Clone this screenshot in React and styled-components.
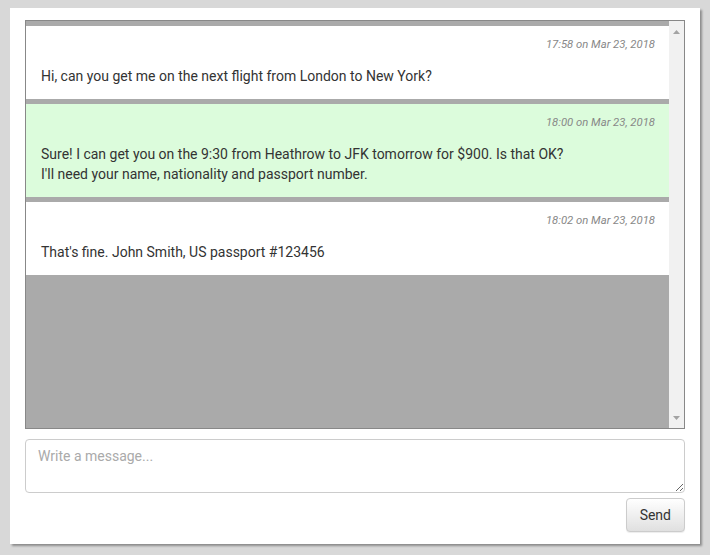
import React, { useState } from 'react'
import styled, { createGlobalStyle } from 'styled-components'

const GlobalStyle = createGlobalStyle`
    body {
        margin: 0;
        padding: 8px 10px;
        background-color: #d8d8d8;
        font-family: Roboto, "Liberation Sans", sans-serif;
        color: #333;
    }
`

const Card = styled.div`
    width: 690px;
    height: 536px;
    box-sizing: border-box;
    background-color: white;
    box-shadow: 2px 2px 2px rgba(0, 0, 0, 0.35);
    padding: 12px 15px 13px;
    display: flex;
    flex-direction: column;
`

const ChatBox = styled.div`
    height: 409px;
    flex-shrink: 0;
    box-sizing: border-box;
    border: 1px solid #888;
    background-color: #aaa;
    display: flex;
`

const Thread = styled.div`
    flex: 1;
    display: flex;
    flex-direction: column;
    gap: 5px;
    padding-top: 5px;
    overflow: hidden;
`

const Scrollbar = styled.div`
    width: 15px;
    background-color: #f1f1f1;
    display: flex;
    flex-direction: column;
    justify-content: space-between;
`

const Arrow = styled.div`
    height: 15px;
    display: flex;
    align-items: center;
    justify-content: center;
    padding-top: ${(props) => (props.down ? '0' : '3px')};
    padding-bottom: ${(props) => (props.down ? '3px' : '0')};
`

const Message = styled.div`
    background-color: ${(props) => (props.mine ? '#dcfcdc' : 'white')};
    padding: 11px 14px 13px 15px;
    font-size: 14px;
    line-height: 20px;
`

const Stamp = styled.div`
    text-align: right;
    font-size: 11.3px;
    line-height: 16px;
    font-style: italic;
    color: #888;
    margin-bottom: 13px;
`

const Input = styled.textarea`
    margin-top: 10px;
    height: 54px;
    flex-shrink: 0;
    box-sizing: border-box;
    border: 1px solid #ccc;
    border-radius: 4px;
    padding: 8px 12px;
    font-family: Roboto, "Liberation Sans", sans-serif;
    font-size: 14px;
    color: #333;
    outline: none;
    &::placeholder {
        color: #aaa;
    }
`

const Footer = styled.div`
    display: flex;
    justify-content: flex-end;
    margin-top: 5px;
`

const Button = styled.button`
    font-family: Roboto, "Liberation Sans", sans-serif;
    font-size: 14px;
    color: #333;
    height: 34px;
    padding: 6px 13px;
    border: 1px solid #ccc;
    border-radius: 4px;
    background-image: linear-gradient(to bottom, #fff 0, #e0e0e0 100%);
    box-shadow: inset 0 1px 0 rgba(255, 255, 255, 0.15), 0 1px 1px rgba(0, 0, 0, 0.075);
    cursor: pointer;
`

const messages = [
    { id: 1, time: '17:58 on Mar 23, 2018', lines: ['Hi, can you get me on the next flight from London to New York?'] },
    {
        id: 2,
        mine: true,
        time: '18:00 on Mar 23, 2018',
        lines: [
            'Sure! I can get you on the 9:30 from Heathrow to JFK tomorrow for $900. Is that OK?',
            "I'll need your name, nationality and passport number.",
        ],
    },
    { id: 3, time: '18:02 on Mar 23, 2018', lines: ["That's fine. John Smith, US passport #123456"] },
]

const App = () => {
    const [text, setText] = useState('')

    return (
        <Card>
            <GlobalStyle />
            <ChatBox>
                <Thread>
                    {messages.map((m) => (
                        <Message key={m.id} mine={m.mine}>
                            <Stamp>{m.time}</Stamp>
                            {m.lines.map((line, i) => (
                                <div key={i}>{line}</div>
                            ))}
                        </Message>
                    ))}
                </Thread>
                <Scrollbar>
                    <Arrow>
                        <svg width='7' height='4' viewBox='0 0 7 4'><path d='M3.5 0L7 4H0z' fill='#a3a3a3' /></svg>
                    </Arrow>
                    <Arrow down>
                        <svg width='7' height='4' viewBox='0 0 7 4'><path d='M0 0H7L3.5 4z' fill='#a3a3a3' /></svg>
                    </Arrow>
                </Scrollbar>
            </ChatBox>
            <Input placeholder='Write a message...' value={text} onChange={(e) => setText(e.target.value)} />
            <Footer>
                <Button>Send</Button>
            </Footer>
        </Card>
    )
}

export default App
